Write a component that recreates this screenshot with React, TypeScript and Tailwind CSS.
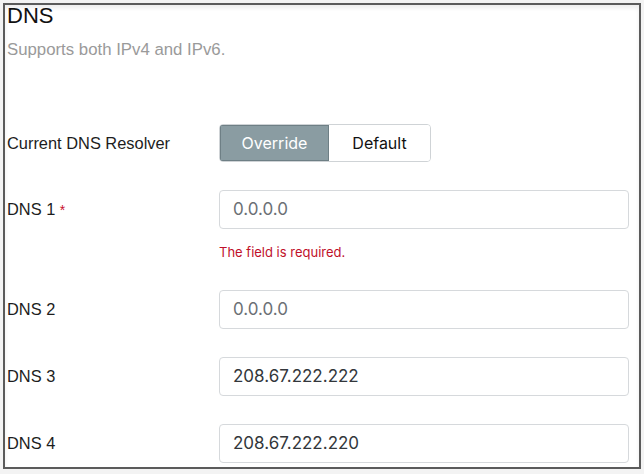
const rows = [
  { label: "DNS 2", value: "0.0.0.0", empty: true },
  { label: "DNS 3", value: "208.67.222.222", empty: false },
  { label: "DNS 4", value: "208.67.222.220", empty: false },
];

const Field = ({ value, empty }: { value: string; empty: boolean }) => (
  <div
    className={`flex h-[39px] w-[410px] items-center rounded-[4px] border border-[#d6d9dc] bg-white pl-[13px] font-['Inter'] text-[17px] ${
      empty ? "text-[#6b7075]" : "text-[#33373b]"
    }`}
  >
    {value}
  </div>
);

export default function App() {
  return (
    <div className="h-[474px] w-[644px] bg-[#f3f3f3] pl-[3px] pt-[3px] font-['Liberation_Sans',Arial,sans-serif]">
      <div className="h-[466px] w-[638px] overflow-hidden border-2 border-[#5b5b5b] bg-white shadow-[inset_0_3px_4px_rgba(0,0,0,0.07)]">
        <div className="pl-[2px]">
          <h1 className="text-[22px] leading-[22px] text-[#111]">DNS</h1>
          <p className="mt-[13px] text-[16.8px] leading-[20px] text-[#9a9a9a]">
            Supports both IPv4 and IPv6.
          </p>

          <div className="mt-[64px] flex items-center">
            <div className="w-[212px] text-[16.4px] text-[#1d1d1d]">Current DNS Resolver</div>
            <div className="flex h-[38px] overflow-hidden rounded-[4px] border border-[#cfd3d6] font-['Inter'] text-[16px]">
              <div className="flex w-[109px] items-center justify-center border border-[#6e7f85] bg-[#8a9ca2] text-white">
                Override
              </div>
              <div className="flex w-[101px] items-center justify-center bg-white text-[#111]">
                Default
              </div>
            </div>
          </div>

          <div className="mt-[28px] flex items-center">
            <div className="w-[212px] text-[16.4px] text-[#1d1d1d]">
              DNS 1 <span className="text-[14px] text-[#c8102e]">*</span>
            </div>
            <Field value="0.0.0.0" empty />
          </div>
          <div className="ml-[212px] mt-[15px] font-['Inter'] text-[13px] leading-[16px] text-[#c0102a]">
            The field is required.
          </div>

          <div className="mt-[30px] flex flex-col gap-[28px]">
            {rows.map((row) => (
              <div key={row.label} className="flex items-center">
                <div className="w-[212px] text-[16.4px] text-[#1d1d1d]">{row.label}</div>
                <Field value={row.value} empty={row.empty} />
              </div>
            ))}
          </div>
        </div>
      </div>
    </div>
  );
}
